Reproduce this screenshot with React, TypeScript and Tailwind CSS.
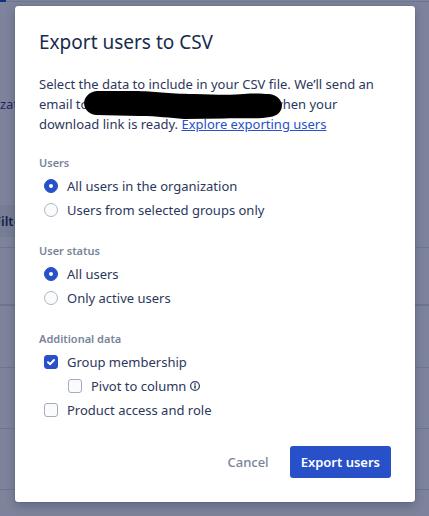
import React, { useState } from 'react';

interface ChoiceProps {
  type: 'radio' | 'checkbox';
  name: string;
  label: string;
  checked: boolean;
  onChange: () => void;
}

const Choice: React.FC<ChoiceProps> = ({ type, name, label, checked, onChange }) => (
  <label className="flex h-6 items-center gap-[9px] pl-[5px]">
    <span className="relative h-3.5 w-3.5 shrink-0">
      <input
        type={type}
        name={name}
        checked={checked}
        onChange={onChange}
        className={`block h-3.5 w-3.5 appearance-none border ${
          type === 'radio' ? 'rounded-full border-[#aeb3c2]' : 'rounded-[3px] border-[#a5abba]'
        } bg-[#fafbfc] checked:border-[#2850c8] checked:bg-[#2850c8]`}
      />
      {checked && (
        <svg viewBox="0 0 14 14" className="pointer-events-none absolute inset-0 h-3.5 w-3.5" aria-hidden="true">
          {type === 'radio' ? (
            <circle cx="7" cy="7" r="2" fill="white" />
          ) : (
            <path d="M4 7.200 6.200 9.200 10 5" fill="none" stroke="white" strokeWidth="2" strokeLinecap="round" strokeLinejoin="round" />
          )}
        </svg>
      )}
    </span>
    <span>{label}</span>
  </label>
);

const InfoIcon = () => (
  <svg viewBox="0 0 12 12" className="ml-[3px] h-3 w-3" role="img" aria-label="More information">
    <circle cx="6" cy="6" r="4.400" fill="none" stroke="#344066" strokeWidth="1.300" />
    <rect x="5.200" y="5.400" width="1.600" height="3.100" fill="#344066" />
    <rect x="5.200" y="3.300" width="1.600" height="1.400" fill="#344066" />
  </svg>
);

const legendStyle = 'text-[11px] leading-4 font-semibold text-[#7a8499]';

const UsersPage = () => (
  <div className="absolute inset-0 overflow-hidden bg-white text-sm text-[#172b4d]" aria-hidden="true">
    <div className="h-0.5 border-b border-[#dfe1e6]">
      <div className="h-0.5 w-1.5 bg-[#0052cc]" />
    </div>
    <p className="pt-[92px] text-[13px] leading-5 text-[#403294]">zation</p>
    <div className="mt-[91px] h-8 w-16 bg-[#f1f2f4] -indent-1.5 text-[13px] leading-8 font-semibold">Filter</div>
    <div className="mt-2.5 h-[57px] border-t border-[#dfe1e6]" />
    <div className="h-[63px] border-t-2 border-[#dfe1e6]" />
    <div className="h-[61px] border-t border-[#dfe1e6]" />
    <div className="h-[61px] border-t border-[#dfe1e6]" />
    <div className="h-[61px] border-t border-[#dfe1e6]" />
  </div>
);

export default function App() {
  const [scope, setScope] = useState('all');
  const [status, setStatus] = useState('all');
  const [membership, setMembership] = useState(true);
  const [pivot, setPivot] = useState(false);
  const [access, setAccess] = useState(false);

  return (
    <div className="relative min-h-screen font-['Noto_Sans','Open_Sans',sans-serif]">
      <UsersPage />
      <div className="relative flex min-h-screen items-start justify-center bg-[#0e1a45]/54 pt-1.5 pr-3.5 pb-3.5 pl-[15px]">
        <div
          role="dialog"
          aria-labelledby="export-title"
          className="w-full max-w-[400px] rounded-[3px] bg-white p-6 text-[13px] leading-5 text-[#2b375c] shadow-[0_0_1px_#091e4299,0_4px_10px_#091e4240]"
        >
          <h1 id="export-title" className="text-[19px] leading-6 text-[#172b4d]">Export users to CSV</h1>

          <p className="mt-5">
            Select the data to include in your CSV file. We’ll send an email to
            <span className="relative inline-block h-3 w-[184px]">
              <svg viewBox="0 0 198 28" className="absolute -top-1.5 -left-1 h-7 w-[198px]" aria-hidden="true">
                <path d="M13 0 H50 C72 0 82 3 110 3 C135 4 150 4 160 3 C172 2 180 3 185 3 C202 5 202 24 186 26 C175 28 160 27 140 27.500 L100 28 C85 27 75 25 55 25 L12 24 C-4 22 -4 2 13 0Z" fill="black" />
              </svg>
            </span>
            when your download link is ready.{' '}
            <a href="#exporting" className="text-[#2850c8] underline">Explore exporting users</a>
          </p>

          <fieldset className="mt-[21px]">
            <legend className={legendStyle}>Users</legend>
            <div className="pt-[3px]">
              <Choice type="radio" name="scope" label="All users in the organization" checked={scope === 'all'} onChange={() => setScope('all')} />
              <Choice type="radio" name="scope" label="Users from selected groups only" checked={scope === 'groups'} onChange={() => setScope('groups')} />
            </div>
          </fieldset>

          <fieldset className="mt-[21px]">
            <legend className={legendStyle}>User status</legend>
            <div className="pt-[3px]">
              <Choice type="radio" name="status" label="All users" checked={status === 'all'} onChange={() => setStatus('all')} />
              <Choice type="radio" name="status" label="Only active users" checked={status === 'active'} onChange={() => setStatus('active')} />
            </div>
          </fieldset>

          <fieldset className="mt-[21px]">
            <legend className={legendStyle}>Additional data</legend>
            <div className="pt-[3px]">
              <Choice type="checkbox" name="membership" label="Group membership" checked={membership} onChange={() => setMembership(!membership)} />
              <div className="flex items-center pl-6">
                <Choice type="checkbox" name="pivot" label="Pivot to column" checked={pivot} onChange={() => setPivot(!pivot)} />
                <InfoIcon />
              </div>
              <Choice type="checkbox" name="access" label="Product access and role" checked={access} onChange={() => setAccess(!access)} />
            </div>
          </fieldset>

          <div className="mt-6 flex justify-end gap-2.5 font-medium">
            <button type="button" className="h-8 rounded-[3px] px-[11px] text-[#7a8499]">Cancel</button>
            <button type="button" className="h-8 rounded-[3px] bg-[#2850c8] px-[11px] font-semibold text-white">Export users</button>
          </div>
        </div>
      </div>
    </div>
  );
}
